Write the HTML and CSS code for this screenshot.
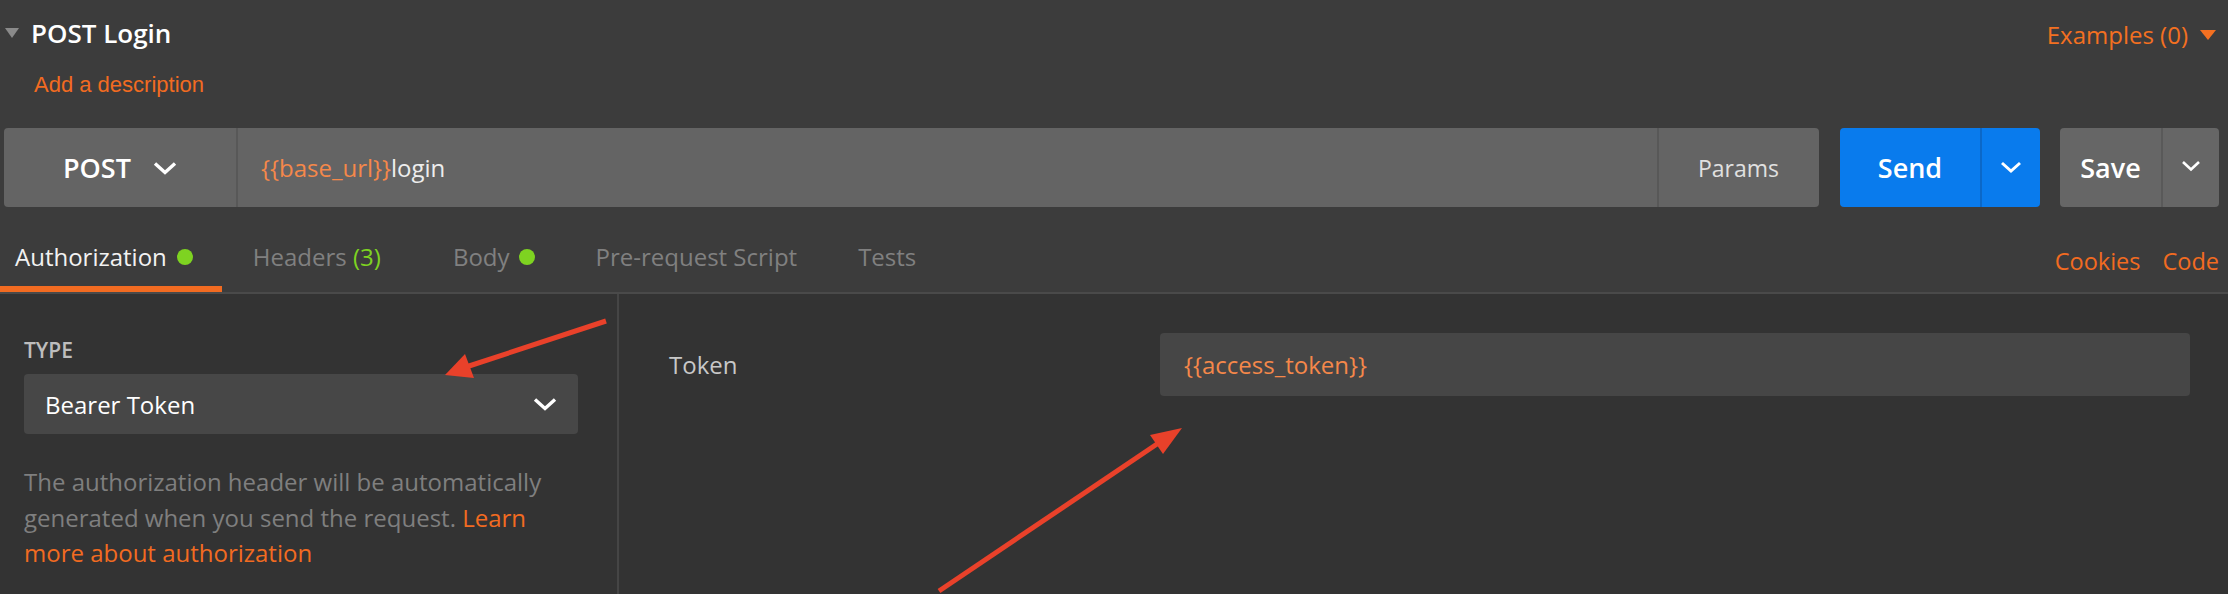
FILE: index.html
```html
<!DOCTYPE html>
<html lang="en">
<head>
<meta charset="utf-8">
<title>POST Login</title>
<link rel="stylesheet" href="styles.css">
</head>
<body>
<div class="app">
  <header class="req-header">
    <div class="title-row">
      <div class="title"><span class="caret"></span><span class="name">POST Login</span></div>
      <div class="examples">Examples (0)<span class="ex-caret"></span></div>
    </div>
    <div class="desc">Add a description</div>
    <div class="url-row">
      <div class="url-bar">
        <div class="method">
          <span>POST</span>
          <svg class="chev" width="24" height="14" viewBox="0 0 24 14"><polyline points="2,2.5 12,11.5 22,2.5" fill="none" stroke="#fff" stroke-width="3.4"/></svg>
        </div>
        <div class="url"><span class="var">{{base_url}}</span>login</div>
        <div class="params">Params</div>
      </div>
      <div class="btn send">
        <span class="btn-label">Send</span>
        <span class="btn-arrow"><svg width="22" height="12" viewBox="0 0 22 12"><polyline points="2,2 11,10 20,2" fill="none" stroke="#fff" stroke-width="3"/></svg></span>
      </div>
      <div class="btn save">
        <span class="btn-label">Save</span>
        <span class="btn-arrow"><svg width="20" height="12" viewBox="0 0 20 12"><polyline points="2,2 10,9.5 18,2" fill="none" stroke="#fff" stroke-width="2.6"/></svg></span>
      </div>
    </div>
    <div class="tabs-row">
      <nav class="tabs">
        <div class="tab active first"><span class="tab-inner">Authorization<span class="dot"></span></span></div>
        <div class="tab headers"><span class="tab-inner">Headers&nbsp;<span class="count">(3)</span></span></div>
        <div class="tab"><span class="tab-inner">Body<span class="dot small-gap"></span></span></div>
        <div class="tab"><span class="tab-inner">Pre-request Script</span></div>
        <div class="tab"><span class="tab-inner">Tests</span></div>
      </nav>
      <div class="tab-links"><span>Cookies</span><span>Code</span></div>
    </div>
  </header>
  <main class="content">
    <section class="auth-left">
      <div class="type-label">TYPE</div>
      <div class="select">
        <span>Bearer Token</span>
        <svg width="24" height="14" viewBox="0 0 24 14"><polyline points="2,2.5 12,11.5 22,2.5" fill="none" stroke="#fff" stroke-width="3.4"/></svg>
      </div>
      <p class="help">The authorization header will be automatically generated when you send the request. <span class="link">Learn more about authorization</span></p>
    </section>
    <section class="auth-right">
      <div class="field-row">
        <div class="field-label">Token</div>
        <div class="field-input"><span class="var">{{access_token}}</span></div>
      </div>
    </section>
  </main>
  <svg class="annotations" width="2228" height="594" viewBox="0 0 2228 594">
    <line x1="606" y1="305" x2="466" y2="351" stroke="#e9412a" stroke-width="5"/>
    <polygon points="445,359 465,338 474,362" fill="#e9412a"/>
    <line x1="939" y1="575" x2="1160" y2="426" stroke="#e9412a" stroke-width="5"/>
    <polygon points="1182,412 1150,419 1163,438" fill="#e9412a"/>
  </svg>
</div>
</body>
</html>
```

FILE: styles.css
```css
html, body {
  margin: 0;
  padding: 0;
  background: #3c3c3c;
  overflow: hidden;
}

.app {
  position: relative;
  width: 2228px;
  height: 594px;
  font-family: "Open Sans", "Noto Sans", sans-serif;
  color: #e8e8e8;
}

/* ---------- header ---------- */
.req-header {
  background: #3c3c3c;
}

.title-row {
  display: flex;
  justify-content: space-between;
  align-items: center;
  height: 34px;
  margin-top: 16px;
  padding-right: 12px;
}

.title {
  display: flex;
  align-items: center;
}

.caret {
  width: 0;
  height: 0;
  margin-left: 5px;
  margin-right: 12px;
  border-left: 7px solid transparent;
  border-right: 7px solid transparent;
  border-top: 10px solid #8a8a8a;
}

.name {
  font-size: 26px;
  font-weight: 600;
  line-height: 34px;
  color: #ffffff;
}

.examples {
  display: flex;
  align-items: center;
  margin-top: 3px;
  font-size: 24px;
  line-height: 34px;
  color: #f37021;
}

.ex-caret {
  width: 0;
  height: 0;
  margin-left: 12px;
  border-left: 8px solid transparent;
  border-right: 8px solid transparent;
  border-top: 10px solid #f37021;
}

.desc {
  margin-top: 23px;
  padding-left: 34px;
  font-family: "Liberation Sans", Arial, sans-serif;
  font-size: 22px;
  line-height: 24px;
  color: #f26b21;
}

/* ---------- url row ---------- */
.url-row {
  display: flex;
  height: 79px;
  margin-top: 31px;
  padding: 0 9px 0 4px;
}

.url-bar {
  flex: 1;
  display: flex;
  background: #646464;
  border-radius: 4px;
}

.method {
  width: 232px;
  display: flex;
  align-items: center;
  justify-content: center;
  gap: 22px;
  border-right: 2px solid #585858;
  font-size: 27px;
  font-weight: 600;
  color: #ffffff;
}

.url {
  flex: 1;
  display: flex;
  align-items: center;
  padding-left: 23px;
  font-size: 24px;
  color: #ededed;
}

.var {
  color: #f5884a;
}

.params {
  display: flex;
  align-items: center;
  padding: 0 40px 0 39px;
  border-left: 2px solid #585858;
  font-size: 23px;
  color: #e0e0e0;
}

.btn {
  display: flex;
  border-radius: 4px;
  font-size: 27px;
  font-weight: 600;
  color: #ffffff;
}

.send {
  width: 200px;
  margin-left: 21px;
  background: #097bed;
}

.save {
  width: 159px;
  margin-left: 20px;
  background: #666666;
}

.btn-label {
  flex: 1;
  display: flex;
  align-items: center;
  justify-content: center;
}

.send .btn-label {
  border-right: 2px solid #0b68c8;
}

.save .btn-label {
  border-right: 2px solid #595959;
}

.btn-arrow {
  display: flex;
  align-items: center;
  justify-content: center;
}

.send .btn-arrow {
  width: 58px;
  padding-bottom: 2px;
}

.save .btn-arrow {
  width: 56px;
  padding-bottom: 4px;
}

/* ---------- tabs ---------- */
.tabs-row {
  display: flex;
  justify-content: space-between;
  height: 85px;
  border-bottom: 2px solid #4a4a4a;
}

.tabs {
  display: flex;
}

.tab {
  box-sizing: border-box;
  height: 85px;
  padding: 34px 30px 0 31px;
  border-bottom: 6px solid transparent;
  font-size: 24px;
  line-height: 32px;
  color: #808080;
}

.tab.first {
  padding-left: 15px;
  padding-right: 29px;
}

.tab.headers {
  padding-right: 41px;
}

.tab.active {
  color: #f2f2f2;
  border-bottom-color: #f26b21;
}

.tab-inner {
  display: flex;
  align-items: center;
  height: 32px;
}

.dot {
  width: 16px;
  height: 16px;
  margin-left: 10px;
  border-radius: 50%;
  background: #7ed321;
}

.dot.small-gap {
  margin-left: 9px;
}

.count {
  color: #7ed321;
}

.tab-links {
  display: flex;
  gap: 22px;
  padding: 38px 9px 0 0;
  font-size: 23.5px;
  line-height: 32px;
  color: #f26b21;
}

/* ---------- content ---------- */
.content {
  display: flex;
  height: 300px;
  background: #333333;
}

.auth-left {
  box-sizing: border-box;
  width: 619px;
  padding: 44px 39px 0 24px;
  border-right: 2px solid #454545;
}

.type-label {
  font-size: 21px;
  font-weight: 600;
  line-height: 24px;
  color: #bdbdbd;
}

.select {
  display: flex;
  align-items: center;
  justify-content: space-between;
  height: 60px;
  margin-top: 12px;
  padding: 0 21px;
  background: #474747;
  border-radius: 4px;
  font-size: 24px;
  color: #ffffff;
}

.help {
  margin: 30px 0 0;
  font-size: 24px;
  line-height: 35.5px;
  color: #7f7f7f;
}

.link {
  color: #f26b21;
}

.auth-right {
  flex: 1;
  padding: 39px 38px 0 50px;
}

.field-row {
  display: flex;
  align-items: center;
}

.field-label {
  width: 491px;
  font-size: 24px;
  color: #c8c8c8;
}

.field-input {
  flex: 1;
  display: flex;
  align-items: center;
  height: 63px;
  padding-left: 24px;
  background: #464646;
  border-radius: 4px;
  font-size: 24px;
}

/* ---------- annotation overlay ---------- */
.annotations {
  position: absolute;
  top: 0;
  left: 0;
  pointer-events: none;
}
```
